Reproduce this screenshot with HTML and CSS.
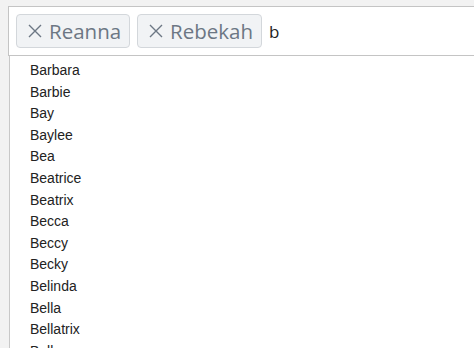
FILE: index.html
```html
<!DOCTYPE html>
<html lang="en">
<head>
    <meta charset="UTF-8">
    <title>Tag select</title>
    <link rel="stylesheet" href="styles.css">
</head>
<body>
    <div class="select">
        <div class="control">
            <span class="tag">
                <svg class="tag-x" viewBox="0 0 14 14"><path d="M1 1L13 13M13 1L1 13"/></svg>
                Reanna
            </span>
            <span class="tag">
                <svg class="tag-x" viewBox="0 0 14 14"><path d="M1 1L13 13M13 1L1 13"/></svg>
                Rebekah
            </span>
            <span class="typed">b</span>
        </div>
        <ul class="options">
            <li>Barbara</li>
            <li>Barbie</li>
            <li>Bay</li>
            <li>Baylee</li>
            <li>Bea</li>
            <li>Beatrice</li>
            <li>Beatrix</li>
            <li>Becca</li>
            <li>Beccy</li>
            <li>Becky</li>
            <li>Belinda</li>
            <li>Bella</li>
            <li>Bellatrix</li>
            <li>Belle</li>
        </ul>
    </div>
</body>
</html>
```

FILE: styles.css
```css
body {
    margin: 0;
    background-color: #f2f2f2;
    font-family: "Liberation Sans", Arial, sans-serif;
    overflow: hidden;
    height: 348px;
}
.select {
    margin: 6px 0 0 8px;
    width: 480px;
}
.control {
    display: flex;
    align-items: center;
    gap: 7px;
    height: 48px;
    padding: 0 7px;
    background-color: #fff;
    border: 1px solid #c4c4c4;
    border-right: none;
}
.tag {
    display: flex;
    align-items: center;
    gap: 7px;
    height: 32px;
    padding: 0 8px 0 11px;
    background-color: #f1f3f5;
    border: 1px solid #d3d7db;
    border-radius: 4px;
    color: #6c7784;
    font-family: "Open Sans", sans-serif;
    font-size: 20.5px;
}
.tag-x {
    width: 14px;
    height: 14px;
    stroke: #6c7784;
    stroke-width: 1.4;
    fill: none;
}
.typed {
    font-family: "Open Sans", sans-serif;
    font-size: 17px;
    color: #222;
}
.options {
    list-style: none;
    margin: 0 0 0 1px;
    padding: 4px 0 0 20px;
    background-color: #fff;
    border-left: 1px solid #c8c8c8;
    color: #222;
    font-size: 14px;
}
.options li {
    height: 21.6px;
    line-height: 21.6px;
}
```
